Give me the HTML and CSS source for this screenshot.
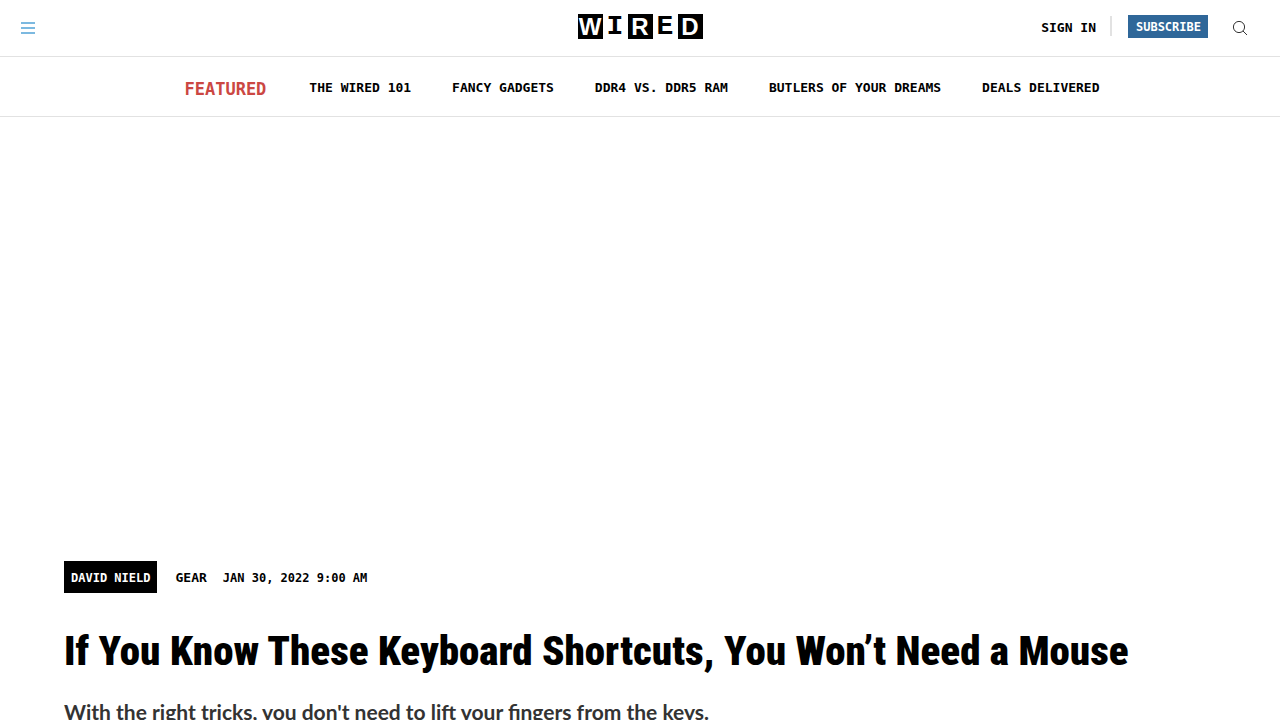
FILE: index.html
```html
<!DOCTYPE html>
<html lang="en">
<head>
<meta charset="utf-8">
<meta name="viewport" content="width=device-width, initial-scale=1">
<title>If You Know These Keyboard Shortcuts, You Won't Need a Mouse | WIRED</title>
<link rel="stylesheet" href="styles.css">
</head>
<body>
<header class="masthead">
  <div class="masthead-start">
    <button class="icon-button" type="button" aria-label="Menu">
      <svg width="14" height="12" viewBox="0 0 14 12" fill="#7cb9e0"><path d="M0 0h14v2H0zM0 5h14v2H0zM0 10h14v2H0z"/></svg>
    </button>
  </div>
  <a class="logo" href="#" aria-label="WIRED">
    <span class="tile tile-dark">W</span><span class="tile tile-slab">I</span><span class="tile tile-dark">R</span><span class="tile tile-slab">E</span><span class="tile tile-dark">D</span>
  </a>
  <div class="masthead-end">
    <a class="sign-in" href="#">SIGN IN</a>
    <a class="subscribe" href="#">SUBSCRIBE</a>
    <button class="icon-button" type="button" aria-label="Search">
      <svg width="16" height="16" viewBox="0 0 16 16" fill="none" stroke="#333"><circle cx="7" cy="7" r="5.6"/><path d="M11 11l4 4"/></svg>
    </button>
  </div>
</header>
<nav class="featured" aria-label="Featured">
  <span class="featured-label">FEATURED</span>
  <a href="#">THE WIRED 101</a>
  <a href="#">FANCY GADGETS</a>
  <a href="#">DDR4 VS. DDR5 RAM</a>
  <a href="#">BUTLERS OF YOUR DREAMS</a>
  <a href="#">DEALS DELIVERED</a>
</nav>
<div class="billboard"></div>
<main class="article">
  <div class="byline">
    <a class="author" href="#">DAVID NIELD</a>
    <a class="rubric" href="#">GEAR</a>
    <time datetime="2022-01-30T09:00">JAN 30, 2022 9:00 AM</time>
  </div>
  <h1 class="headline">If You Know These Keyboard Shortcuts, You Won’t Need a Mouse</h1>
  <p class="deck">With the right tricks, you don't need to lift your fingers from the keys.</p>
</main>
</body>
</html>
```
FILE: styles.css
```css
* { box-sizing: border-box; }
body {
  margin: 0;
  background: #fff;
  color: #000;
  font-family: "DejaVu Sans Mono", monospace;
  font-size: 13px;
  font-weight: 700;
  line-height: 16px;
}
a { color: inherit; text-decoration: none; }
.masthead {
  display: grid;
  grid-template-columns: 1fr auto 1fr;
  align-items: center;
  padding: 8px 20px 8px 8px;
  border-bottom: 1px solid #e2e2e2;
}
.masthead-start, .masthead-end { display: flex; align-items: center; }
.masthead-end { justify-content: flex-end; }
.icon-button {
  display: flex;
  align-items: center;
  justify-content: center;
  width: 40px;
  height: 40px;
  padding: 0;
  border: 0;
  background: none;
}
.logo { display: flex; margin: 0 0 3px 12px; }
.tile {
  width: 25px;
  height: 25px;
  font-size: 24px;
  line-height: 26px;
  text-align: center;
}
.tile-dark {
  background: #000;
  color: #fff;
  font-family: "Liberation Sans", sans-serif;
}
.tile-slab {
  font-family: "Liberation Mono", monospace;
  font-size: 28px;
}
.sign-in {
  margin-bottom: 4px;
  padding: 4px 14px 0 0;
  border-right: 2px solid #e2e2e2;
}
.subscribe {
  margin: 0 12px 3px 16px;
  padding: 4px 7px 3px 8px;
  background: #2f6799;
  color: #fff;
  font-size: 12px;
}
.featured {
  display: flex;
  align-items: center;
  justify-content: center;
  gap: 41px;
  padding: 22px 0 19px 4px;
  border-bottom: 1px solid #e2e2e2;
}
.featured-label {
  padding: 2px 2px 0 0;
  color: #cb4742;
  font-size: 17px;
}
.billboard { height: 444px; }
.article { padding: 0 64px; }
.byline { display: flex; align-items: center; }
.author {
  padding: 9px 7px 7px;
  background: #000;
  color: #fff;
  font-size: 12px;
}
.rubric { margin: 0 16px 0 18px; padding-top: 2px; }
time { padding-top: 2px; font-size: 12px; }
.headline {
  margin: 28px 0 0;
  font-family: "Roboto Condensed", Roboto, sans-serif;
  font-size: 41px;
  font-weight: 900;
  line-height: 60px;
}
.deck {
  margin: 17px 0 0;
  color: #333;
  font-family: Lato, sans-serif;
  font-size: 21px;
  line-height: 28px;
}
```
